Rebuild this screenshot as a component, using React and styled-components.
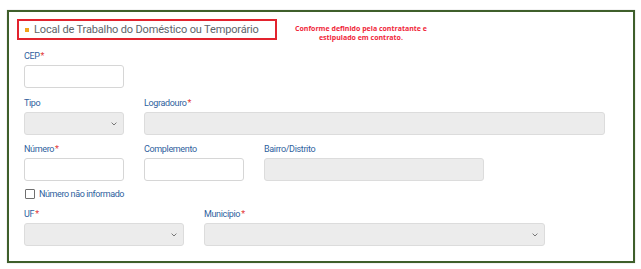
import React from 'react';
import styled, { createGlobalStyle } from 'styled-components';

const GlobalStyle = createGlobalStyle`
  body, html {
    margin: 0;
    padding: 0;
    background: #ffffff;
    font-family: Roboto, "Liberation Sans", sans-serif;
  }
`;

const Page = styled.div`
  padding: 10px 6px 6px 7px;
`;

const Frame = styled.div`
  width: 608px;
  height: 242px;
  border: 2px solid #3f5f2b;
  padding: 7px 8px 0 8px;
  box-sizing: content-box;
  box-shadow: 0 0 1px rgba(0, 0, 0, 0.3);
`;

const Header = styled.div`
  display: flex;
  align-items: flex-start;
  gap: 18px;
`;

const TitleBox = styled.div`
  width: 250px;
  height: 17px;
  border: 2px solid #e2232e;
  display: flex;
  align-items: center;
  padding-left: 6px;
  gap: 5px;
`;

const Bullet = styled.span`
  width: 4px;
  height: 4px;
  background: #f2a31b;
  flex: none;
`;

const Title = styled.span`
  font-size: 11px;
  color: #60646a;
  white-space: nowrap;
  letter-spacing: -0.15px;
`;

const Note = styled.div`
  font-family: "Open Sans", "Liberation Sans", sans-serif;
  font-weight: 700;
  font-size: 7px;
  line-height: 9px;
  color: #f0273a;
  text-align: center;
  padding-top: 5px;
`;

const Form = styled.div`
  padding-left: 7px;
  margin-top: 8px;
`;

const Row = styled.div`
  display: flex;
  gap: 20px;
  margin-top: ${p => p.$top || 0}px;
`;

const Field = styled.div`
  display: flex;
  flex-direction: column;
  width: ${p => p.$w}px;
`;

const Label = styled.label`
  font-size: 9px;
  letter-spacing: -0.35px;
  line-height: 12px;
  color: #2f5f9e;
  margin-bottom: 3px;
  height: 12px;
`;

const Req = styled.span`
  color: #e23a3a;
  margin-left: 1px;
`;

const Input = styled.div`
  height: 21px;
  border: 1px solid ${p => (p.$disabled ? '#dcdcdc' : '#d6d6d6')};
  border-radius: 3px;
  background: ${p => (p.$disabled ? '#ececec' : '#ffffff')};
  display: flex;
  align-items: center;
  justify-content: flex-end;
  padding-right: 6px;
`;

const CheckRow = styled.div`
  display: flex;
  align-items: center;
  gap: 4px;
  margin-top: 8px;
  padding-left: 1px;
`;

const Box = styled.span`
  width: 8px;
  height: 8px;
  border: 1px solid #6f6f6f;
  border-radius: 1px;
  background: #fff;
`;

const CheckText = styled.span`
  font-size: 9px;
  letter-spacing: -0.4px;
  color: #2f5f9e;
`;

const Chevron = () => (
  <svg width="6" height="4" viewBox="0 0 6 4">
    <path d="M0.6 0.6 L3 3 L5.4 0.6" fill="none" stroke="#777" strokeWidth="1" />
  </svg>
);

const TextField = ({ label, required, width, disabled, select }) => (
  <Field $w={width}>
    <Label>
      {label}
      {required && <Req>*</Req>}
    </Label>
    <Input $disabled={disabled}>{select && <Chevron />}</Input>
  </Field>
);

export default function App() {
  return (
    <>
      <GlobalStyle />
      <Page>
        <Frame>
          <Header>
            <TitleBox>
              <Bullet />
              <Title>Local de Trabalho do Doméstico ou Temporário</Title>
            </TitleBox>
            <Note>
              Conforme definido pela contratante e
              <br />
              estipulado em contrato.
            </Note>
          </Header>
          <Form>
            <Row>
              <TextField label="CEP" required width={100} />
            </Row>
            <Row $top={9}>
              <TextField label="Tipo" width={100} disabled select />
              <TextField label="Logradouro" required width={461} disabled />
            </Row>
            <Row $top={8}>
              <TextField label="Número" required width={100} />
              <TextField label="Complemento" width={100} />
              <TextField label="Bairro/Distrito" width={220} disabled />
            </Row>
            <CheckRow>
              <Box />
              <CheckText>Número não informado</CheckText>
            </CheckRow>
            <Row $top={9}>
              <TextField label="UF" required width={160} disabled select />
              <TextField label="Município" required width={341} disabled select />
            </Row>
          </Form>
        </Frame>
      </Page>
    </>
  );
}
